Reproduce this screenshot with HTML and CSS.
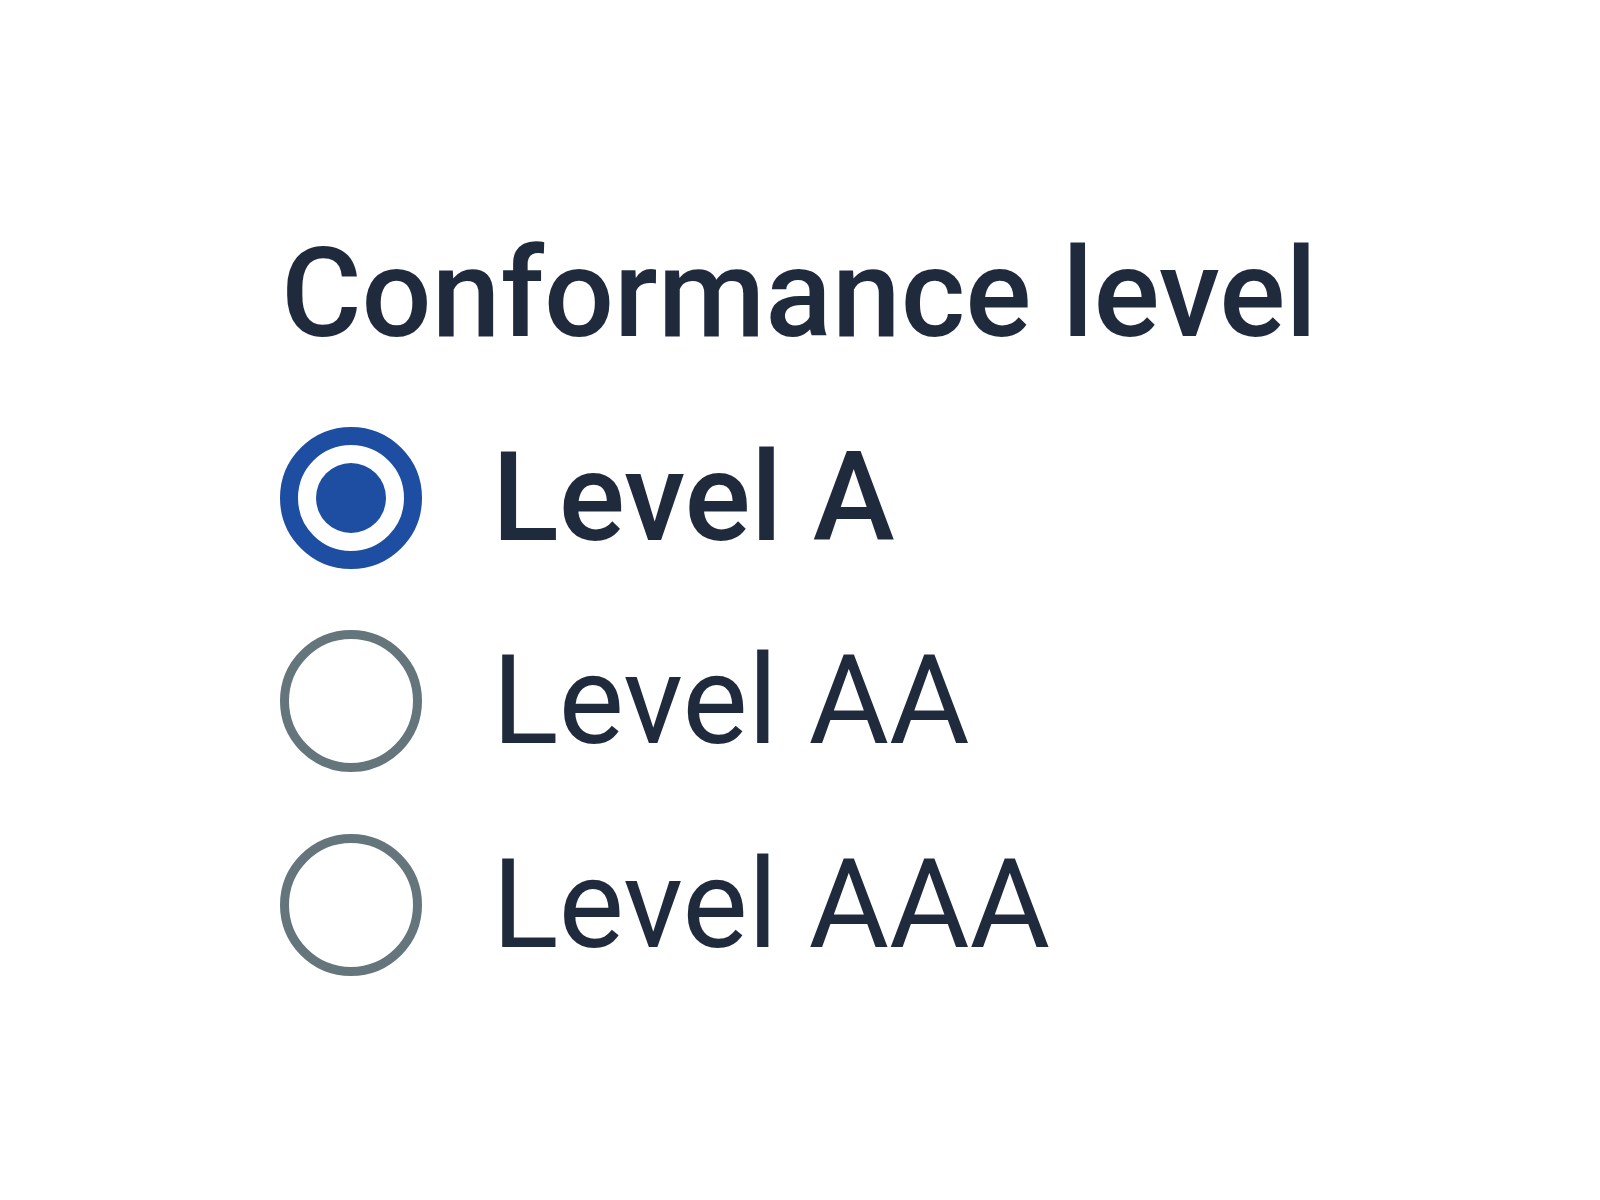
FILE: index.html
```html
<!DOCTYPE html>
<html lang="en">
<head>
<meta charset="utf-8">
<title>Conformance level</title>
<link rel="stylesheet" href="styles.css">
</head>
<body>
<div class="group" role="radiogroup" aria-labelledby="title">
  <h1 class="title" id="title">Conformance level</h1>
  <div class="options">
    <div class="option selected" role="radio" aria-checked="true">
      <svg class="radio" viewBox="0 0 142 142" width="142" height="142" aria-hidden="true">
        <circle cx="71" cy="71" r="62" fill="none" stroke="#1e4ea1" stroke-width="18"/>
        <circle cx="71" cy="71" r="35" fill="#1e4ea1"/>
      </svg>
      <span class="label">Level A</span>
    </div>
    <div class="option" role="radio" aria-checked="false">
      <svg class="radio" viewBox="0 0 142 142" width="142" height="142" aria-hidden="true">
        <circle cx="71" cy="71" r="66.5" fill="none" stroke="#64757c" stroke-width="9"/>
      </svg>
      <span class="label">Level AA</span>
    </div>
    <div class="option" role="radio" aria-checked="false">
      <svg class="radio" viewBox="0 0 142 142" width="142" height="142" aria-hidden="true">
        <circle cx="71" cy="71" r="66.5" fill="none" stroke="#64757c" stroke-width="9"/>
      </svg>
      <span class="label">Level AAA</span>
    </div>
  </div>
</div>
</body>
</html>
```
FILE: styles.css
```css
html, body {
  margin: 0;
  padding: 0;
  background: #ffffff;
}
body {
  font-family: Roboto, "Liberation Sans", sans-serif;
  color: #1f2a3d;
}
.group {
  padding: 232px 0 0 280px;
}
.title {
  margin: 0 0 71px 1px;
  font-size: 123.5px;
  line-height: 1;
  font-weight: 500;
}
.options {
  display: flex;
  flex-direction: column;
  gap: 61.5px;
}
.option {
  display: flex;
  align-items: center;
  gap: 70px;
}
.radio {
  display: block;
  flex-shrink: 0;
}
.label {
  font-size: 123.5px;
  line-height: 1;
  font-weight: 400;
}
.selected .label {
  font-weight: 500;
}
```
